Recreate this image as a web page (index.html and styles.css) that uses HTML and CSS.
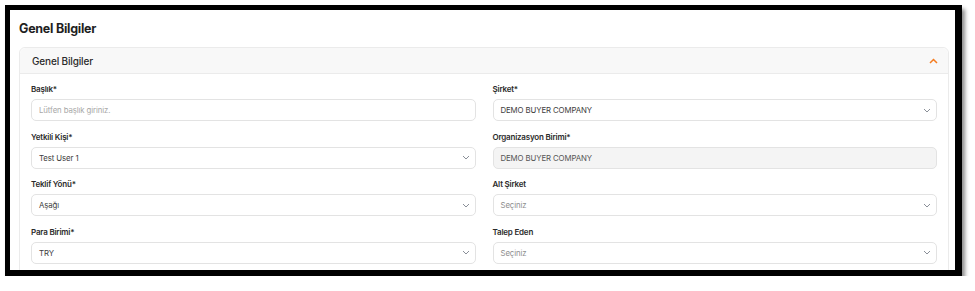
FILE: index.html
```html
<!DOCTYPE html>
<html lang="tr">
<head>
    <meta charset="UTF-8">
    <meta name="viewport" content="width=device-width, initial-scale=1.0">
    <title>Genel Bilgiler</title>
    <link rel="stylesheet" href="styles.css">
</head>
<body>
    <div class="shot-frame">
        <h2 class="page-title">Genel Bilgiler</h2>

        <div class="panel">
            <div class="panel-header">
                <span>Genel Bilgiler</span>
                <svg class="chev-up" width="9" height="6" viewBox="0 0 9 6"><path d="M1 5 L4.5 1.5 L8 5" fill="none" stroke="#f47c20" stroke-width="1.5"/></svg>
            </div>

            <div class="panel-body">
                <div class="form-group">
                    <label>Başlık*</label>
                    <div class="field placeholder">Lütfen başlık giriniz.</div>
                </div>
                <div class="form-group">
                    <label>Şirket*</label>
                    <div class="field select">DEMO BUYER COMPANY
                        <svg class="chev" width="8" height="5" viewBox="0 0 8 5"><path d="M1 1 L4 4 L7 1" fill="none" stroke="#8a8f98" stroke-width="1"/></svg>
                    </div>
                </div>

                <div class="form-group">
                    <label>Yetkili Kişi*</label>
                    <div class="field select">Test User 1
                        <svg class="chev" width="8" height="5" viewBox="0 0 8 5"><path d="M1 1 L4 4 L7 1" fill="none" stroke="#8a8f98" stroke-width="1"/></svg>
                    </div>
                </div>
                <div class="form-group">
                    <label>Organizasyon Birimi*</label>
                    <div class="field disabled">DEMO BUYER COMPANY</div>
                </div>

                <div class="form-group">
                    <label>Teklif Yönü*</label>
                    <div class="field select">Aşağı
                        <svg class="chev" width="8" height="5" viewBox="0 0 8 5"><path d="M1 1 L4 4 L7 1" fill="none" stroke="#8a8f98" stroke-width="1"/></svg>
                    </div>
                </div>
                <div class="form-group">
                    <label>Alt Şirket</label>
                    <div class="field select muted">Seçiniz
                        <svg class="chev" width="8" height="5" viewBox="0 0 8 5"><path d="M1 1 L4 4 L7 1" fill="none" stroke="#8a8f98" stroke-width="1"/></svg>
                    </div>
                </div>

                <div class="form-group">
                    <label>Para Birimi*</label>
                    <div class="field select">TRY
                        <svg class="chev" width="8" height="5" viewBox="0 0 8 5"><path d="M1 1 L4 4 L7 1" fill="none" stroke="#8a8f98" stroke-width="1"/></svg>
                    </div>
                </div>
                <div class="form-group">
                    <label>Talep Eden</label>
                    <div class="field select muted">Seçiniz
                        <svg class="chev" width="8" height="5" viewBox="0 0 8 5"><path d="M1 1 L4 4 L7 1" fill="none" stroke="#8a8f98" stroke-width="1"/></svg>
                    </div>
                </div>
            </div>
        </div>
    </div>
</body>
</html>
```

FILE: styles.css
```css
* {
    box-sizing: border-box;
    margin: 0;
    padding: 0;
}

body {
    background: #ffffff;
    font-family: Inter, 'Liberation Sans', Arial, sans-serif;
    color: #222;
}

.shot-frame {
    margin: 5px 0 0 5px;
    width: 957px;
    height: 271px;
    border: 5px solid #000;
    border-right-width: 7px;
    border-bottom-width: 6px;
    box-shadow: 3px 4px 4px rgba(0, 0, 0, 0.45);
    background: #fff;
    padding: 11px 6px 0 9px;
    overflow: hidden;
}

.page-title {
    font-size: 12.5px;
    font-weight: 700;
    letter-spacing: -0.25px;
    color: #1f1f1f;
    line-height: 16px;
    margin-bottom: 10px;
}

.panel {
    border: 1px solid #ebebeb;
    border-radius: 6px;
}

.panel-header {
    height: 26px;
    background: #f8f8f8;
    border-bottom: 1px solid #ebebeb;
    border-radius: 6px 6px 0 0;
    display: flex;
    align-items: center;
    justify-content: space-between;
    padding: 0 10px 0 12px;
    font-size: 10px;
    font-weight: 500;
    letter-spacing: -0.15px;
    color: #2a2a2a;
}

.panel-body {
    display: grid;
    grid-template-columns: 1fr 1fr;
    column-gap: 17px;
    row-gap: 9.5px;
    padding: 9px 11px 20px 11px;
}

.form-group label {
    display: block;
    font-size: 8px;
    font-weight: 600;
    letter-spacing: -0.2px;
    color: #2b2b2b;
    line-height: 13px;
    margin-bottom: 3px;
}

.field {
    height: 22px;
    border: 1px solid #e3e3e3;
    border-radius: 5px;
    display: flex;
    align-items: center;
    justify-content: space-between;
    padding: 0 5px 0 7px;
    font-size: 7.8px;
    letter-spacing: -0.1px;
    color: #3d3d3d;
}

.field.muted {
    color: #8e8e8e;
}

.field.placeholder {
    color: #a8a8a8;
}

.field.disabled {
    background: #f4f4f4;
    color: #555;
}
```
